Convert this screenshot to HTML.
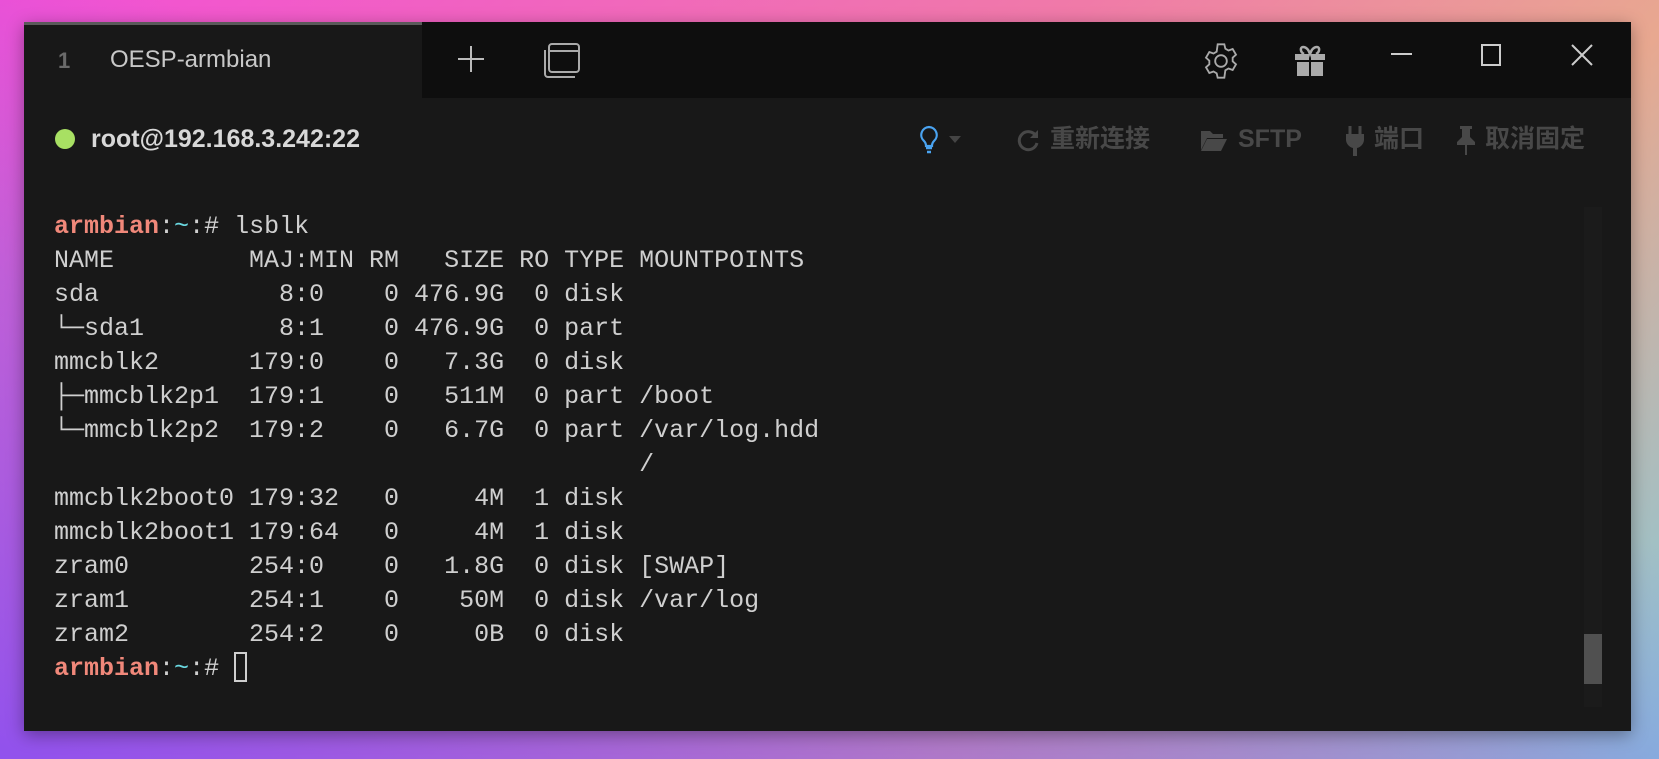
<!DOCTYPE html>
<html><head><meta charset="utf-8"><style>
*{margin:0;padding:0;box-sizing:border-box}
body{width:1659px;height:759px;overflow:hidden;position:relative;
background:linear-gradient(135deg,#f24fd6 0%,#f07aa8 45%,#e8a890 70%,#84cada 100%);}
.bg2{position:absolute;inset:0;background:linear-gradient(20deg,rgba(140,80,240,.95) 0%,rgba(140,100,230,.5) 35%,rgba(0,0,0,0) 60%);}
.win{position:absolute;left:24px;top:22px;width:1607px;height:709px;background:#181818;box-shadow:0 4px 16px rgba(0,0,0,.35);font-family:"Liberation Sans","Noto Sans CJK SC",sans-serif}
.tabbar{position:absolute;left:0;top:0;width:100%;height:76px;background:#0e0e0e}
.tab{position:absolute;left:0;top:0;width:398px;height:76px;background:#181818;border-top:3px solid #5a5a5a}
.tab .n{position:absolute;left:34px;top:23px;color:#6a6a6a;font-size:22px;font-weight:bold}
.tab .t{position:absolute;left:86px;top:21px;color:#c8c8c8;font-size:24px}
svg{position:absolute}
.status{position:absolute;top:102px;left:0;width:100%;height:40px}
.dot{position:absolute;left:31px;top:5px;width:20px;height:20px;border-radius:50%;background:#a8e063}
.host{position:absolute;left:67px;top:0;color:#d8d8d8;font-size:25px;font-weight:bold;line-height:30px}
.btn{position:absolute;top:0;color:#484848;font-size:25px;font-weight:bold;line-height:30px}
.term{position:absolute;left:30px;top:188px;font-family:"Liberation Mono",monospace;font-size:25px;line-height:34px;color:#cfcfcf;white-space:pre}
.p{color:#f0887a;font-weight:bold}.c{color:#6ad8e0}
.cur{display:inline-block;width:13px;height:30px;border:2px solid #cfcfcf;vertical-align:-7px}
.track{position:absolute;left:1560px;top:185px;width:18px;height:500px;background:#1b1b1b}
.thumb{position:absolute;left:1560px;top:612px;width:18px;height:50px;background:#505050}
</style></head><body><div class="bg2"></div>
<div class="win">
<div class="tabbar">
 <div class="tab"><span class="n">1</span><span class="t">OESP-armbian</span></div>
 <svg style="left:432px;top:22px" width="30" height="30" viewBox="0 0 30 30"><path d="M15 2V28M2 15H28" stroke="#bbb" stroke-width="2"/></svg>
 <svg style="left:519px;top:20px" width="38" height="36" viewBox="0 0 38 36"><rect x="6" y="2" width="30" height="28" rx="3" fill="none" stroke="#aaa" stroke-width="2"/><path d="M6 9H36M2 8V32a3 3 0 0 0 3 3H32" fill="none" stroke="#aaa" stroke-width="2"/></svg>
 <svg style="left:1177px;top:19px" width="40" height="40" viewBox="0 0 24 24"><path d="M12 8.5a3.5 3.5 0 1 0 0 7a3.5 3.5 0 1 0 0-7zM10 2h4l.6 2.6 1.9 1.1 2.5-.9 2 3.4-2 1.8v2.2l2 1.8-2 3.4-2.5-.9-1.9 1.1L14 22h-4l-.6-2.6-1.9-1.1-2.5.9-2-3.4 2-1.8V11.8l-2-1.8 2-3.4 2.5.9 1.9-1.1z" fill="none" stroke="#aaa" stroke-width="1.1"/></svg>
 <svg style="left:1269px;top:22px" width="34" height="34" viewBox="0 0 34 34"><path d="M10 3c4 0 6 4 7 7c1-3 3-7 7-7c3 0 3 5-1 7" fill="none" stroke="#aaa" stroke-width="2.5"/><path d="M10 3c-3 0-3 5 1 7" fill="none" stroke="#aaa" stroke-width="2.5"/><rect x="2" y="10" width="14" height="6" fill="#aaa"/><rect x="18" y="10" width="14" height="6" fill="#aaa"/><rect x="4" y="18" width="12" height="14" fill="#aaa"/><rect x="18" y="18" width="12" height="14" fill="#aaa"/></svg>
 <svg style="left:1367px;top:31px" width="22" height="4"><rect width="21" height="2" fill="#ccc"/></svg>
 <svg style="left:1457px;top:22px" width="22" height="24"><rect x="1" y="1" width="18" height="20" fill="none" stroke="#ccc" stroke-width="2"/></svg>
 <svg style="left:1546px;top:21px" width="24" height="24"><path d="M2 2L22 22M22 2L2 22" stroke="#ccc" stroke-width="2"/></svg>
</div>
<div class="status">
 <div class="dot"></div><div class="host">root@192.168.3.242:22</div>
 <svg style="left:895px;top:1px" width="20" height="30" viewBox="0 0 20 30"><path d="M10 2a8 8 0 0 0-5 14c1 1 2 3 2 5h6c0-2 1-4 2-5A8 8 0 0 0 10 2z" fill="none" stroke="#4aa3f0" stroke-width="2.2"/><path d="M7 23h6M8 27h4" stroke="#4aa3f0" stroke-width="2.5"/></svg>
 <svg style="left:925px;top:12px" width="12" height="8"><path d="M0 0H12L6 7z" fill="#444"/></svg>
 <svg style="left:993px;top:4px" width="24" height="24" viewBox="0 0 24 24"><path d="M19 8A9 9 0 1 0 20 15" fill="none" stroke="#484848" stroke-width="3"/><path d="M21 2V10H13z" fill="#484848"/></svg>
 <span class="btn" style="left:1026px">重新连接</span>
 <svg style="left:1176px;top:4px" width="28" height="24" viewBox="0 0 28 24"><path d="M1 3h9l3 3h10v4H7L1 22z" fill="#484848"/><path d="M7 11h20l-6 12H1z" fill="#484848"/></svg>
 <span class="btn" style="left:1214px">SFTP</span>
 <svg style="left:1320px;top:2px" width="22" height="30" viewBox="0 0 22 30"><path d="M6 0v8M16 0v8" stroke="#484848" stroke-width="3"/><path d="M2 8h18v6a9 9 0 0 1-7 8v8h-4v-8a9 9 0 0 1-7-8z" fill="#484848"/></svg>
 <span class="btn" style="left:1350px">端口</span>
 <svg style="left:1432px;top:1px" width="20" height="30" viewBox="0 0 20 30"><path d="M4 1h12v3h-2v8l5 5v3H1v-3l5-5V4H4z" fill="#484848"/><path d="M10 20v10" stroke="#484848" stroke-width="2"/></svg>
 <span class="btn" style="left:1461px">取消固定</span>
</div>
<div class="term"><span class="p">armbian</span>:<span class="c">~</span>:# lsblk
NAME         MAJ:MIN RM   SIZE RO TYPE MOUNTPOINTS
sda            8:0    0 476.9G  0 disk 
└─sda1         8:1    0 476.9G  0 part 
mmcblk2      179:0    0   7.3G  0 disk 
├─mmcblk2p1  179:1    0   511M  0 part /boot
└─mmcblk2p2  179:2    0   6.7G  0 part /var/log.hdd
                                       /
mmcblk2boot0 179:32   0     4M  1 disk 
mmcblk2boot1 179:64   0     4M  1 disk 
zram0        254:0    0   1.8G  0 disk [SWAP]
zram1        254:1    0    50M  0 disk /var/log
zram2        254:2    0     0B  0 disk 
<span class="p">armbian</span>:<span class="c">~</span>:# <span class="cur"></span></div>
<div class="track"></div><div class="thumb"></div>
</div>
</body></html>
